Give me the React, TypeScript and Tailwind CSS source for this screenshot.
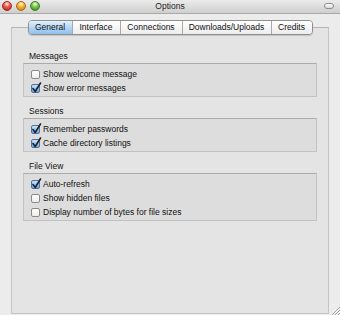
const tabs = [
  { label: "General", w: "w-[43px]", active: true },
  { label: "Interface", w: "w-[48px]" },
  { label: "Connections", w: "w-[62px]" },
  { label: "Downloads/Uploads", w: "w-[89px]" },
  { label: "Credits", w: "w-[41px]" },
];

const sections = [
  {
    title: "Messages",
    items: [
      { label: "Show welcome message", checked: false },
      { label: "Show error messages", checked: true },
    ],
  },
  {
    title: "Sessions",
    items: [
      { label: "Remember passwords", checked: true },
      { label: "Cache directory listings", checked: true },
    ],
  },
  {
    title: "File View",
    items: [
      { label: "Auto-refresh", checked: true },
      { label: "Show hidden files", checked: false },
      { label: "Display number of bytes for file sizes", checked: false },
    ],
  },
];

function Light({ from, to, border }: { from: string; to: string; border: string }) {
  return (
    <span
      className="w-[10px] h-[10px] rounded-full border"
      style={{
        background: `radial-gradient(circle at 50% 25%, #ffffffcc 0%, ${from} 40%, ${to} 100%)`,
        borderColor: border,
      }}
    />
  );
}

function Checkbox({ checked }: { checked: boolean }) {
  if (!checked) {
    return (
      <span className="relative w-[9px] h-[9px] shrink-0 rounded-[2px] border border-[#8a8a8a] bg-gradient-to-b from-white to-[#ececec]" />
    );
  }
  return (
    <span className="relative w-[9px] h-[9px] shrink-0 rounded-[2px] border border-[#4f73a0] bg-gradient-to-b from-[#cfe4f8] to-[#6aa6e2]">
      <svg
        className="absolute -left-[1px] -top-[3px]"
        width="11"
        height="12"
        viewBox="0 0 11 12"
      >
        <path
          d="M2 6.5 L4.2 9.5 L9.5 1"
          fill="none"
          stroke="#1b2330"
          strokeWidth="1.6"
          strokeLinecap="round"
          strokeLinejoin="round"
        />
      </svg>
    </span>
  );
}

export default function App() {
  return (
    <div className="relative w-[340px] h-[315px] overflow-hidden bg-[#ececec] text-[8.5px] text-[#111] font-['Liberation_Sans',Arial,sans-serif]">
      {/* title bar */}
      <div className="relative h-[14px] flex items-center border-b border-[#a9a9a9] bg-gradient-to-b from-[#ebebeb] to-[#cfcfcf]">
        <div className="flex items-center gap-[4px] pl-[2px] -mt-[2px]">
          <Light from="#f55a4e" to="#b3160d" border="#9b2a22" />
          <Light from="#fbb736" to="#c47400" border="#a56a10" />
          <Light from="#7fcd4b" to="#2d850f" border="#3f7a24" />
        </div>
        <span className="absolute left-0 right-0 -mt-[1px] text-center text-[#222]">Options</span>
        <span className="absolute right-[6px] top-[3px] w-[10px] h-[6px] rounded-full border border-[#8c8c8c] bg-gradient-to-b from-white to-[#d8d8d8]" />
      </div>

      <div className="pl-[11px] pt-[13px]">
        <div className="relative w-[318px] h-[287px] border border-[#c4c4c4] border-t-[#b5b5b5] bg-[#e4e4e4] px-[11px] pt-[22px]">
          {/* tabs */}
          <div className="absolute left-0 right-0 -top-[8px] flex justify-center">
            <div className="flex h-[15px] rounded-[4px] border border-[#8e8e8e] shadow-[0_1px_1px_rgba(0,0,0,0.15)] overflow-hidden">
              {tabs.map((t, i) => (
                <div
                  key={t.label}
                  className={
                    (t.active
                      ? "bg-gradient-to-b from-[#e2f0fc] via-[#b5d6f4] to-[#8fc0ee] "
                      : "bg-gradient-to-b from-white to-[#ededed] ") +
                    (i > 0 ? "border-l border-[#a8a8a8] " : "") +
                    t.w +
                    " flex items-center justify-center text-[#111]"
                  }
                >
                  {t.label}
                </div>
              ))}
            </div>
          </div>

          <div className="flex flex-col gap-[8px]">
            {sections.map((s) => (
              <div key={s.title}>
                <div className="h-[13px] leading-[13px] pl-[6px]">{s.title}</div>
                <div className="border border-[#c2c2c2] border-t-[#ababab] bg-[#dddddd] rounded-[1px] pl-[7px] pt-[3px] pb-[1px]">
                  {s.items.map((it) => (
                    <div key={it.label} className="h-[14px] flex items-center gap-[3px]">
                      <Checkbox checked={it.checked} />
                      <span>{it.label}</span>
                    </div>
                  ))}
                </div>
              </div>
            ))}
          </div>
        </div>
      </div>

      {/* resize grip */}
      <svg className="absolute right-0 bottom-0" width="9" height="9" viewBox="0 0 9 9">
        <path d="M1 9 L9 1 M4 9 L9 4 M7 9 L9 7" stroke="#a0a0a0" strokeWidth="1" />
        <path d="M2 9 L9 2 M5 9 L9 5 M8 9 L9 8" stroke="#ffffff" strokeWidth="1" />
      </svg>
    </div>
  );
}
